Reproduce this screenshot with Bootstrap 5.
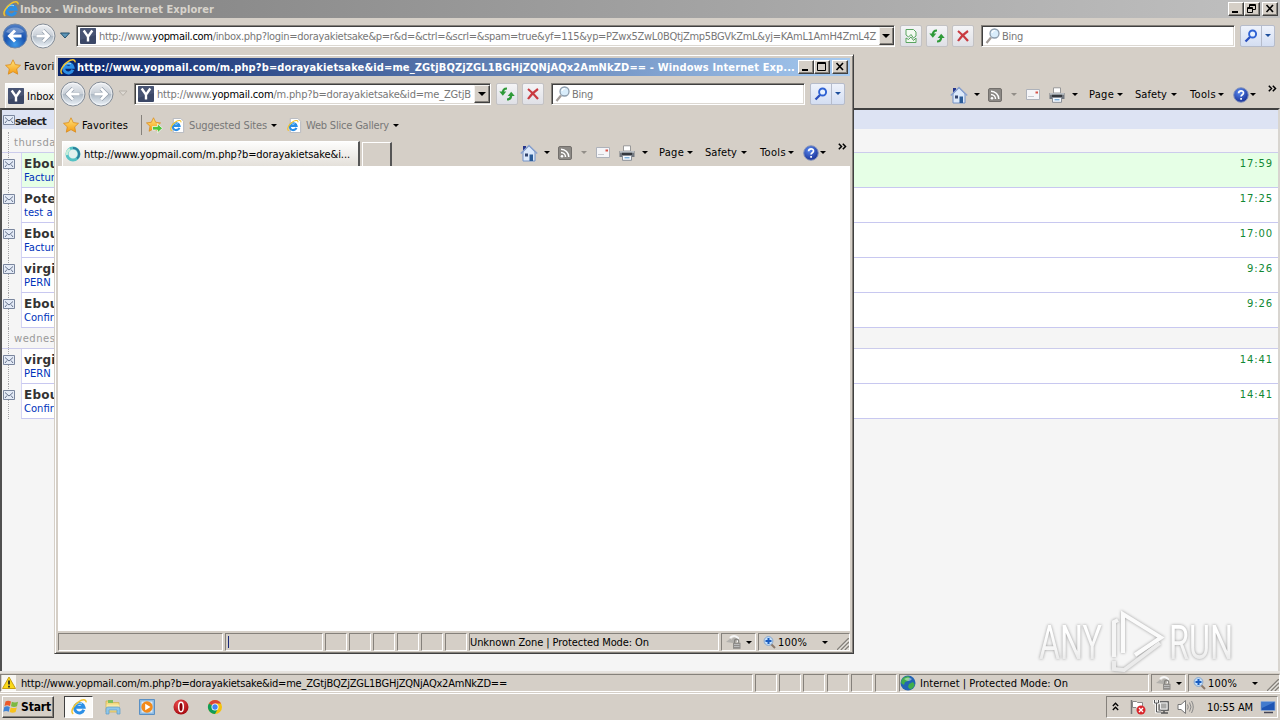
<!DOCTYPE html>
<html lang="en">
<head>
  <meta charset="UTF-8" />
  <meta name="viewport" content="width=device-width, initial-scale=1.0"/>
  <title>Inbox - Windows Internet Explorer</title>
  <link href="https://cdn.jsdelivr.net/npm/bootstrap@5.3.3/dist/css/bootstrap.min.css" rel="stylesheet"/>
  <style>
    :root {
      --face: #d5cfc7;
      --shade: #85817b;
      --dark: #404040;
    }

    body {
      width: 1280px;
      height: 720px;
      overflow: hidden;
      font: 11px/14px "DejaVu Sans Condensed", "DejaVu Sans", sans-serif;
      color: #000;
      background: var(--face);
    }

    svg { display: block; flex: none; }
    span { white-space: nowrap; flex: none; padding-top: 2px; }

    /* window frames */
    .desk { width: 1280px; height: 720px; }
    .title-bar { height: 18px; padding: 0 2px; gap: 1px; font-weight: bold; }
    .title-main { background: linear-gradient(90deg, #808080, #c0c0c0); color: #d8d4cc; padding-left: 3px; }
    .title-pop { background: linear-gradient(90deg, #0a246a, #a6caf0); color: #fff; }
    .caps { gap: 0; }
    .cap-btn {
      width: 16px; height: 14px;
      background: var(--face);
      border: 1px solid;
      border-color: #fff var(--dark) var(--dark) #fff;
      box-shadow: inset -1px -1px 0 var(--shade);
    }
    .cap-btn:last-child { margin-left: 2px; }
    .popup {
      left: 54px; top: 54px; width: 800px; height: 600px;
      background: var(--face);
      border: 1px solid;
      border-color: var(--face) var(--dark) var(--dark) var(--face);
      box-shadow: inset 1px 1px 0 #fff, inset -1px -1px 0 var(--shade);
      padding: 3px 3px 2px;
    }

    /* address row */
    .nav-row { height: 35px; padding-left: 2px; }
    .round-pair { gap: 2px; }
    .recent { margin: 0 6px 0 4px; }
    .field {
      height: 22px;
      padding-left: 3px;
      background: #fff;
      border: 1px solid;
      border-color: var(--shade) #fff #fff var(--shade);
      box-shadow: inset 1px 1px 0 var(--dark), inset -1px -1px 0 #dcd8d2;
      color: #777;
    }
    .field b { font-weight: normal; color: #000; }
    .f-url { gap: 3px; margin-right: 5px; }
    .f-wide { width: 819px; }
    .f-short { width: 357px; }
    .f-bing { width: 254px; gap: 1px; margin: 0 5px 0 7px; }
    .drop {
      width: 16px; height: 18px;
      background: var(--face);
      border: 1px solid;
      border-color: #f4f2ee var(--dark) var(--dark) #f4f2ee;
      box-shadow: inset -1px -1px 0 var(--shade);
    }
    .drop .arr { border-width: 4px 4px 0; }
    .sq-btn {
      width: 22px; height: 22px;
      background: linear-gradient(#f4f4f6, #dfe0e6);
      border: 1px solid #c3c2c4;
      border-radius: 2px;
      flex: none;
    }
    .blue-btn { width: 35px; background: linear-gradient(#eef2fb, #d4def2); border-color: #b6bccb; }
    .find-part { width: 21px; border-right: 1px solid #b6bccb; }
    .arr { width: 0; height: 0; border: 3px solid transparent; border-top-color: #000; border-bottom: 0; flex: none; }
    .arr-dim { border-top-color: #928e88; }
    .arr-blue { border-top-color: #1d4f9c; }

    /* favorites, tabs and command bar */
    .fav-row { height: 28px; padding-left: 5px; }
    .fav-row > span { margin-left: 3px; }
    .fav-main > span { padding-top: 0; }
    .fav-sep { width: 1px; height: 20px; margin: 0 4px 0 13px; background: var(--shade); }
    .fav-link { gap: 4px; margin-left: 10px; color: #777; }
    .fav-first { margin-left: 7px; }
    .tab-row { height: 27px; }
    .tab-box { background: linear-gradient(#fdfdfc, #e4e0da); border-top: 1px solid #fff; border-left: 1px solid #fff; gap: 3px; }
    .tab-inbox { margin: 2px 0 0 5px; width: 150px; padding-left: 2px; }
    .tab-pop { margin: 2px 0 0 4px; width: 298px; padding-left: 2px; border-right: 2px solid #555; }
    .tab-new { margin: 3px 0 0 2px; width: 30px; border: solid; border-width: 1px 2px 0 1px; border-color: #fff #555 #fff #fff; }
    .tools { width: 330px; }
    .tools span { padding-top: 0; }
    .tools > svg { margin-bottom: 13px; }
    .tool { display: flex; align-items: center; justify-content: space-between; flex: none; }
    .t-home { width: 38px; padding-right: 8px; }
    .t-feed { width: 38px; padding-right: 9px; }
    .t-mail { width: 23px; }
    .t-print { width: 40px; padding-right: 11px; }
    .t-page { width: 46px; padding-right: 12px; }
    .t-safe { width: 55px; padding-right: 13px; }
    .t-tool { width: 43px; padding-right: 9px; }
    .t-help { width: 35px; padding-right: 12px; }

    /* mailbox */
    .inbox { height: 563px; background: #f5f5f5; border: solid; border-width: 2px 2px 0 2px; border-color: #404040 #d8d5d0 #fff #505050; }
    .inbox-head { height: 19px; padding-left: 1px; background: #dde3f3; font: bold 10.5px/16px "DejaVu Sans", sans-serif; color: #222; }
    .rail { width: 19px; position: relative; flex: none; }
    .rail::before { content: ""; position: absolute; left: 6px; top: 0; bottom: 0; border-left: 1px dotted #a5a5a8; }
    .rail svg { position: relative; margin: 6px 0 0 1px; }
    .day { height: 21px; font: 10px/21px "DejaVu Sans", sans-serif; color: #999; border-bottom: 1px solid #ccccec; }
    .day-first { height: 24px; padding-top: 3px; }
    .day span { margin-left: -7px; letter-spacing: .5px; background: #f5f5f5; line-height: 12px; }
    .msg { height: 35px; }
    .msg-body { background: #fff; border-bottom: 1px solid #c8c8f0; border-left: 1px solid #d4d4f4; padding: 5px 5px 0 2px; font-family: "DejaVu Sans", sans-serif; }
    .msg-new { background: #e6ffe6; }
    .who { font-weight: bold; font-size: 12px; color: #333; line-height: 13px; letter-spacing: .2px; }
    .topic { font-size: 10px; color: #03b; line-height: 13px; }
    .when { font-size: 10px; color: #183; line-height: 12px; letter-spacing: .9px; }

    /* status bar and taskbar */
    .status { height: 20px; gap: 2px; }
    .status-pop { padding-top: 2px; }
    .cell {
      height: 18px;
      border: 1px solid;
      border-color: var(--shade) #fff #fff var(--shade);
      display: flex; align-items: center;
      flex: none;
    }
    .c-text { width: 753px; }
    .c-blank { width: 165px; }
    .c-progress { width: 98px; padding-left: 2px; }
    .c-progress i { width: 1px; height: 12px; background: #1a2a7a; }
    .c-slot { width: 22px; }
    .c-zone { width: 250px; }
    .c-lock { width: 35px; }
    .c-zoom { width: 92px; padding-left: 4px; gap: 2px; }
    .c-zoom .arr { margin-left: 13px; }
    .status-main { height: 22px; border-top: 2px solid #e6e3df; padding-top: 1px; }
    .taskbar { height: 27px; border-top: 1px solid #fff; padding: 0 2px; }
    .start {
      width: 52px; height: 22px; gap: 2px;
      border: 1px solid;
      border-color: #fff var(--dark) var(--dark) #fff;
      box-shadow: inset -1px -1px 0 var(--shade);
      font-weight: bold; font-size: 12px;
    }
    .start span { padding-top: 0; }
    .task-on {
      width: 29px; height: 22px; margin-left: 10px;
      background: #fbfaf8;
      border: 1px solid;
      border-color: var(--dark) #fff #fff var(--dark);
    }
    .pins { gap: 18px; margin-left: 12px; }
    .tray { width: 172px; height: 22px; gap: 7px; padding-left: 5px; border: 1px solid; border-color: var(--shade) #fff #fff var(--shade); }
    .tray-more { margin: 0 4px 2px 0; }
    .tray span { margin-left: 6px; }

    .brand { left: 1030px; top: 604px; }
    .brand g { filter: drop-shadow(0 0 1.500px #999); }
    .brand text { font: 400 49px/1 Roboto, sans-serif; }
  </style>
</head>
<body>

  <!-- icon sprite -->
  <svg width="0" height="0" class="position-absolute">
    <defs>
      <radialGradient id="gBlue" cx=".5" cy=".85" r=".8"><stop offset="0" stop-color="#3f9bea"/><stop offset=".55" stop-color="#1c55b0"/><stop offset="1" stop-color="#4c7cc4"/></radialGradient>
      <linearGradient id="gGlass" x1="0" y1="0" x2="0" y2="1"><stop offset="0" stop-color="#f0f2f5"/><stop offset=".48" stop-color="#c9d0d8"/><stop offset=".52" stop-color="#b0bbc6"/><stop offset="1" stop-color="#eef4fa"/></linearGradient>
      <linearGradient id="gStar" x1="0" y1="0" x2="0" y2="1"><stop offset="0" stop-color="#ffe680"/><stop offset="1" stop-color="#f59a10"/></linearGradient>
      <radialGradient id="gRed" cx=".4" cy=".3" r=".8"><stop offset="0" stop-color="#f05050"/><stop offset="1" stop-color="#9c0008"/></radialGradient>
      <radialGradient id="gHelp" cx=".4" cy=".3" r=".8"><stop offset="0" stop-color="#5a8af0"/><stop offset="1" stop-color="#10268c"/></radialGradient>
    </defs>
    <symbol id="ie" viewBox="0 0 16 16">
      <path d="M12.800 10.800A4.700 4.700 0 1 1 13 8.300H4.500" fill="none" stroke="#2b8fe6" stroke-width="3"/>
      <path d="M4 7.400C5 4.800 8 3.400 11 4.800" fill="none" stroke="#9edcff" stroke-width="1"/>
      <path d="M2.300 14.800C-1 13 2.500 6 7.500 2.800C11 .4 15.500-.2 15 3.400" fill="none" stroke="#f3c32d" stroke-width="1.500"/>
    </symbol>
    <symbol id="iepage" viewBox="0 0 16 16">
      <path d="M3.500.5h8l3 3v12h-11z" fill="#fff" stroke="#b5b9bf"/>
      <use href="#ie" x="0" y="2" width="12.500" height="12.500"/>
    </symbol>
    <symbol id="back" viewBox="0 0 26 26">
      <circle cx="13" cy="13" r="12" fill="url(#gBlue)" stroke="#7087a8"/>
      <path d="M4 9a10 8 0 0 1 18 0q-9 4-18 0z" fill="#fff" opacity=".3"/>
      <path d="M19.500 13H8M13 7.500L7.500 13l5.500 5.500" fill="none" stroke="#fff" stroke-width="3"/>
    </symbol>
    <symbol id="backoff" viewBox="0 0 26 26">
      <circle cx="13" cy="13" r="12" fill="url(#gGlass)" stroke="#858d97"/>
      <circle cx="13" cy="13" r="10.800" fill="none" stroke="#fff" stroke-width=".8" opacity=".7"/>
      <path d="M19.500 13H8M13 7.500L7.500 13l5.500 5.500" fill="none" stroke="#8f9aa8" stroke-width="4"/>
      <path d="M19.500 13H8M13 7.500L7.500 13l5.500 5.500" fill="none" stroke="#fff" stroke-width="2.800"/>
    </symbol>
    <symbol id="fwdoff" viewBox="0 0 26 26"><use href="#backoff" transform="translate(26 0) scale(-1 1)" width="26" height="26"/></symbol>
    <symbol id="ylogo" viewBox="0 0 16 16">
      <rect width="16" height="16" rx="1" fill="#3b4766"/>
      <path d="M0 0h16v7L0 12z" fill="#55627f" opacity=".5"/>
      <path d="M3.700 2.500L8 8.600 12.300 2.500M8 8v5.500" fill="none" stroke="#fff" stroke-width="2.400"/>
    </symbol>
    <symbol id="star" viewBox="0 0 16 16"><path d="M8 .8l2.300 4.800 5.200.7-3.800 3.600 1 5.300L8 12.600l-4.700 2.600 1-5.300L.5 6.300l5.200-.7z" fill="url(#gStar)" stroke="#d98a1c" stroke-width=".8"/></symbol>
    <symbol id="staradd" viewBox="0 0 17 17"><use href="#star" width="15" height="15"/><path d="M6.500 9.500h5V6.800l5 4.500-5 4.500V13h-5z" fill="#4fc43c" stroke="#fff" stroke-width=".7"/></symbol>
    <symbol id="refresh" viewBox="0 0 16 16">
      <path d="M8 2.500C5 2.500 3.800 4 3.800 7" fill="none" stroke="#2f9a38" stroke-width="2.200"/><path d="M.3 5.500h7L3.800 9.800z" fill="#2f9a38"/>
      <path d="M8 13.500c3 0 4.200-1.500 4.200-4.500" fill="none" stroke="#2f9a38" stroke-width="2.200"/><path d="M8.700 10h7L12.200 5.700z" fill="#2f9a38"/>
    </symbol>
    <symbol id="compat" viewBox="0 0 16 16"><path d="M3 7V1.500h7.500L13 4v4l-2.500 2L8 6.500 5.500 9z" fill="#f2faf0" stroke="#5aa560"/><path d="M3 10l2.500 1.500L8 9l2.500 3.500L13 10v4.500H3z" fill="#f2faf0" stroke="#5aa560"/></symbol>
    <symbol id="stop" viewBox="0 0 16 16"><path d="M3 3q5 4 10 10M13 3Q7 7 3 13" fill="none" stroke="#c93a40" stroke-width="2.200"/></symbol>
    <symbol id="glass" viewBox="0 0 16 16"><path d="M1.500 15L6 9.500" stroke="#a39c98" stroke-width="2.200"/><circle cx="9.500" cy="5.500" r="4.500" fill="#d9edfb" stroke="#8d9dad" stroke-width="1.300"/><path d="M7 5a3 3 0 0 1 3-2.500" fill="none" stroke="#fff" stroke-width="1.200"/></symbol>
    <symbol id="find" viewBox="0 0 14 14"><path d="M1.500 12.500L6 8" stroke="#2a4fbd" stroke-width="2.300"/><circle cx="8.600" cy="5" r="3.500" fill="#e8f2ff" stroke="#2f62d4" stroke-width="1.900"/></symbol>
    <symbol id="home" viewBox="0 0 18 18"><path d="M3 2h3v4L3 9z" fill="#24358c"/><path d="M3 8l6-6 6 6v9H3z" fill="#dce9fa" stroke="#7593c8"/><path d="M.8 9.500L9 1.500l8.200 8" fill="none" stroke="#8ba2ce" stroke-width="1.600"/><path d="M9.500 10.500h3.500V17H9.500z" fill="#2b5c98"/><path d="M5 9.500h3v3H5z" fill="#33446e"/></symbol>
    <symbol id="feed" viewBox="0 0 14 14"><rect x=".5" y=".5" width="13" height="13" rx="1.500" fill="#8c8985" stroke="#73706c"/><circle cx="4" cy="10.200" r="1.300" fill="#fff"/><path d="M3 6.500a4.500 4.500 0 0 1 4.500 4.500M3 3.200A7.800 7.800 0 0 1 10.800 11" fill="none" stroke="#fff" stroke-width="1.500"/></symbol>
    <symbol id="mail" viewBox="0 0 14 11"><path d="M.5.5h13v10H.5z" fill="#f5f5f8" stroke="#aeb2ba"/><path d="M2 7.500h6" stroke="#c6c8ce"/><path d="M9.500 2.500h2.500v2H9.500z" fill="#d65348"/></symbol>
    <symbol id="print" viewBox="0 0 16 16"><path d="M4.500.8h7V6h-7z" fill="#fff" stroke="#999"/><path d="M.5 6h15v6H.5z" fill="#71777f"/><path d="M1 6h14v1.800H1z" fill="#b9bec4"/><path d="M3 7.800h10v3H3z" fill="#34383e"/><path d="M3.500 10.500h9v4.800h-9z" fill="#f4f9ff" stroke="#8a8f96"/><path d="M5.500 12.800h5" stroke="#4a90c8"/></symbol>
    <symbol id="help" viewBox="0 0 16 16"><circle cx="8" cy="8" r="7.300" fill="url(#gHelp)" stroke="#8796bc" stroke-width="1"/><path d="M5.600 6.200C5.600 3 10.600 3.200 10.500 6 10.400 7.800 8.100 7.700 8.100 9.600M8.100 11v1.800" fill="none" stroke="#fff" stroke-width="1.700"/></symbol>
    <symbol id="more" viewBox="0 0 9 7"><path d="M.8.800L3.500 3.500.8 6.200M4.800.800L7.500 3.500 4.800 6.200" fill="none" stroke="#000" stroke-width="1.500"/></symbol>
    <symbol id="env" viewBox="0 0 12 10"><path d="M.5.500h11v9H.5z" fill="#e4ebf7" stroke="#7a869e"/><path d="M2 2.500l4 3.500 4-3.500M2 8l2-2.500M10 8L8 5.500" fill="none" stroke="#66728c"/></symbol>
    <symbol id="lock" viewBox="0 0 16 16"><path d="M0 8l5-4v2q3-4 6-2v3L7 13V9z" fill="#b3b1ad"/><path d="M4 4q4-4 8 0v4" fill="none" stroke="#f6f6f6" stroke-width="2"/><path d="M8.500 9V7.200a2 2 0 0 1 4.200 0V9" fill="none" stroke="#85837f" stroke-width="1.200"/><path d="M7 8.800h7.500v6H7z" fill="#8f8d8a"/><path d="M8 10.500h5.500M8 12.500h5.500" stroke="#bbb"/></symbol>
    <symbol id="zoom" viewBox="0 0 13 13"><path d="M8 8l4 4" stroke="#8b7a6c" stroke-width="2"/><circle cx="5.500" cy="5" r="4.400" fill="#c4e0fb" stroke="#86a5cc"/><path d="M5.500 2v6M2.500 5h6" stroke="#1a5cc0" stroke-width="2"/></symbol>
    <symbol id="grip" viewBox="0 0 12 12"><path d="M0 12L12 0M4 12l8-8M8 12l4-4" stroke="#85817b" stroke-width="1.500"/><path d="M1.500 12L12 1.500M5.500 12L12 5.500M9.500 12L12 9.500" stroke="#fff" stroke-width=".7"/></symbol>
    <symbol id="globe" viewBox="0 0 16 16"><circle cx="8" cy="8" r="7.500" fill="#2264b4"/><path d="M3 3q4-3 7-1L8 6l-3 1-1 3-3-2q0-3 2-5zM9 9l4-2 1.800 3q-1.500 3.500-4.500 4.500L8 12z" fill="#41ae4b"/><path d="M4 4q4-3 8 0-3 4-8 0z" fill="#fff" opacity=".45"/></symbol>
    <symbol id="warn" viewBox="0 0 16 16"><path d="M1 0h14v16H1z" fill="#f7f6f2"/><path d="M8 2l6.500 11.500h-13z" fill="#fbd916" stroke="#c79f10"/><path d="M8 5.500v4M8 10.800v1.700" stroke="#222" stroke-width="1.700"/></symbol>
    <symbol id="flagwin" viewBox="0 0 16 16"><path d="M2.500 2.500Q5 .8 8 2.500L7 7Q4.300 5.500 1.500 7z" fill="#ec5a2a"/><path d="M8.800 2.800Q12 4.200 15 2.700L14 7.300Q11 8.800 8 7.300z" fill="#7cb942"/><path d="M1.300 8Q4 6.500 6.800 8L5.800 12.700Q3 11.300.3 12.700z" fill="#3f83d6"/><path d="M7.700 8.400Q10.500 9.800 13.800 8.400L12.600 13Q9.600 14.400 6.700 13z" fill="#f8c21c"/></symbol>
    <symbol id="folder" viewBox="0 0 16 16"><path d="M1 2h5l1 1.500h7V13H1z" fill="#f1d980" stroke="#cfae4e" stroke-width=".7"/><path d="M3 1h5v3H3z" fill="#7fbf5e"/><path d="M1.500 5.500h13l-.8 6H2z" fill="#fae9a4"/><path d="M1 15V10q0-2 2-2h10q2 0 2 2v5h-3v-4H4v4z" fill="#8fc7ea" stroke="#5b9bc8" stroke-width=".7"/></symbol>
    <symbol id="wmp" viewBox="0 0 16 16"><path d="M.5.500h15v15H.5z" fill="#8dbbe2" stroke="#5a90c4"/><path d="M2.500 2.500h11v11h-11z" fill="#dcebf8"/><circle cx="8" cy="8" r="5.700" fill="#f28a1b"/><path d="M6.200 4.800L11.500 8l-5.300 3.200z" fill="#fff"/></symbol>
    <symbol id="opera" viewBox="0 0 16 16"><circle cx="8" cy="8" r="7.500" fill="url(#gRed)"/><ellipse cx="8" cy="8" rx="2.300" ry="4.700" fill="#8a0008" stroke="#fff" stroke-width="1.500"/></symbol>
    <symbol id="chrome" viewBox="0 0 16 16"><circle cx="8" cy="8" r="7" fill="#f4c20d"/><path d="M8 8L1.900 4.500A7 7 0 0 1 14.100 4.500H8z" fill="#db4437"/><path d="M1.900 4.500A7 7 0 0 0 8 15l3-5.200L8 8z" fill="#0f9d58"/><circle cx="8" cy="8" r="3.500" fill="#fff"/><circle cx="8" cy="8" r="2.700" fill="#4285f4"/></symbol>
    <symbol id="min" viewBox="0 0 14 12"><path d="M3 9h6" stroke="#000" stroke-width="2"/></symbol>
    <symbol id="max" viewBox="0 0 14 12"><path d="M2.500 1.500h8v8h-8zM2.500 2.500h8" fill="none" stroke="#000"/></symbol>
    <symbol id="restore" viewBox="0 0 14 12"><path d="M4.500 4V1.500h6v5H8M4.500 2.500h6M2.500 4.500h5v5h-5zM2.500 5.500h5" fill="none" stroke="#000"/></symbol>
    <symbol id="close" viewBox="0 0 14 12"><path d="M3.500 2l6.500 7M10 2L3.500 9" stroke="#000" stroke-width="1.600"/></symbol>
  </svg>

  <div class="desk d-flex flex-column">

    <!-- main window -->
    <div class="title-bar title-main d-flex align-items-center">
      <svg width="16" height="16"><use href="#ie"/></svg>
      <span data-w="194">Inbox - Windows Internet Explorer</span>
      <div class="caps d-flex ms-auto">
        <div class="cap-btn"><svg width="14" height="12"><use href="#min"/></svg></div>
        <div class="cap-btn"><svg width="14" height="12"><use href="#restore"/></svg></div>
        <div class="cap-btn"><svg width="14" height="12"><use href="#close"/></svg></div>
      </div>
    </div>

    <div class="nav-row d-flex align-items-center">
      <div class="round-pair d-flex">
        <svg width="26" height="26"><use href="#back"/></svg>
        <svg width="26" height="26"><use href="#fwdoff"/></svg>
      </div>
      <svg width="10" height="7" class="recent"><path d="M.5 1h9L5 6z" fill="#5d96b8" stroke="#24516e"/></svg>
      <div class="field f-url f-wide d-flex align-items-center">
        <svg width="16" height="16"><use href="#ylogo"/></svg>
        <span data-w="777">http://www.<b>yopmail.com</b>/inbox.php?login=dorayakietsake&amp;p=r&amp;d=&amp;ctrl=&amp;scrl=&amp;spam=true&amp;yf=115&amp;yp=PZwx5ZwL0BQtjZmp5BGVkZmL&amp;yj=KAmL1AmH4ZmL4Z</span>
        <div class="drop d-flex align-items-center justify-content-center ms-auto"><i class="arr"></i></div>
      </div>
      <div class="d-flex gap-1">
        <div class="sq-btn d-flex align-items-center justify-content-center"><svg width="16" height="16"><use href="#compat"/></svg></div>
        <div class="sq-btn d-flex align-items-center justify-content-center"><svg width="16" height="16"><use href="#refresh"/></svg></div>
        <div class="sq-btn d-flex align-items-center justify-content-center"><svg width="16" height="16"><use href="#stop"/></svg></div>
      </div>
      <div class="field f-bing d-flex align-items-center">
        <svg width="16" height="16"><use href="#glass"/></svg><span data-w="21">Bing</span>
      </div>
      <div class="sq-btn blue-btn d-flex">
        <div class="find-part d-flex align-items-center justify-content-center"><svg width="14" height="14"><use href="#find"/></svg></div>
        <div class="d-flex align-items-center justify-content-center flex-fill"><i class="arr arr-blue"></i></div>
      </div>
    </div>

    <div class="fav-row fav-main d-flex align-items-center">
      <svg width="16" height="16"><use href="#star"/></svg><span data-w="46">Favorites</span>
    </div>

    <div class="tab-row d-flex">
      <div class="tab-box tab-inbox d-flex align-items-center">
        <svg width="16" height="16"><use href="#ylogo"/></svg><span data-w="27">Inbox</span>
      </div>
      <div class="tools d-flex align-items-center ms-auto">
        <div class="tool t-home"><svg width="18" height="18"><use href="#home"/></svg><i class="arr"></i></div>
        <div class="tool t-feed"><svg width="14" height="14"><use href="#feed"/></svg><i class="arr arr-dim"></i></div>
        <div class="tool t-mail"><svg width="14" height="11"><use href="#mail"/></svg></div>
        <div class="tool t-print"><svg width="16" height="16"><use href="#print"/></svg><i class="arr"></i></div>
        <div class="tool t-page"><span data-w="25">Page</span><i class="arr"></i></div>
        <div class="tool t-safe"><span data-w="32">Safety</span><i class="arr"></i></div>
        <div class="tool t-tool"><span data-w="26">Tools</span><i class="arr"></i></div>
        <div class="tool t-help"><svg width="16" height="16"><use href="#help"/></svg><i class="arr"></i></div>
        <svg width="9" height="7"><use href="#more"/></svg>
      </div>
    </div>

    <div class="inbox">
      <div class="inbox-head d-flex align-items-center"><svg width="12" height="10"><use href="#env"/></svg><span data-w="31">select</span><span class="ms-2 fw-normal text-secondary">:</span></div>
      <div class="day day-first d-flex align-items-center"><div class="rail h-100"></div><span>thursday</span></div>
      <div id="thursday"></div>
      <div class="day d-flex align-items-center"><div class="rail h-100"></div><span>wednesday</span></div>
      <div id="wednesday"></div>
    </div>

    <div class="status status-main d-flex">
      <div class="cell c-text"><svg width="16" height="16"><use href="#warn"/></svg><span class="ms-1" data-w="486">http://www.yopmail.com/m.php?b=dorayakietsake&amp;id=me_ZGtjBQZjZGL1BGHjZQNjAQx2AmNkZD==</span></div>
      <div class="cell c-slot"></div><div class="cell c-slot"></div><div class="cell c-slot"></div>
      <div class="cell c-slot"></div><div class="cell c-slot"></div><div class="cell c-slot"></div>
      <div class="cell c-zone"><svg width="16" height="16"><use href="#globe"/></svg><span class="ms-1" data-w="148">Internet | Protected Mode: On</span></div>
      <div class="cell c-lock"><svg width="16" height="16" class="ms-1"><use href="#lock"/></svg><i class="arr ms-1"></i></div>
      <div class="cell c-zoom"><svg width="13" height="13"><use href="#zoom"/></svg><span data-w="29">100%</span><i class="arr"></i><svg width="12" height="12" class="ms-auto mt-1"><use href="#grip"/></svg></div>
    </div>

    <div class="taskbar d-flex align-items-center">
      <div class="start d-flex align-items-center"><svg width="16" height="16"><use href="#flagwin"/></svg><span data-w="30">Start</span></div>
      <div class="task-on d-flex align-items-center justify-content-center"><svg width="16" height="16"><use href="#ie"/></svg></div>
      <div class="pins d-flex">
        <svg width="16" height="16"><use href="#folder"/></svg>
        <svg width="16" height="16"><use href="#wmp"/></svg>
        <svg width="16" height="16"><use href="#opera"/></svg>
        <svg width="16" height="16"><use href="#chrome"/></svg>
      </div>
      <div class="tray d-flex align-items-center ms-auto">
        <svg width="7" height="9" class="tray-more"><path d="M.8 4L3.500 1.200 6.200 4M.8 8L3.500 5.200 6.200 8" fill="none" stroke="#000" stroke-width="1.300"/></svg>
        <svg width="16" height="16"><path d="M1.500 1v14" stroke="#777" stroke-width="1.500"/><path d="M2.500 2.500h4l1 1h5v6H7l-1-1H2.500z" fill="#fff" stroke="#888"/><circle cx="11" cy="11" r="4.500" fill="#d9262c"/><path d="M9 9l4 4M13 9l-4 4" stroke="#fff" stroke-width="1.400"/></svg>
        <svg width="17" height="16"><path d="M6 2.500h9.500v9H6z" fill="#9a9a98" stroke="#666"/><path d="M7.500 4h6.500v6H7.500z" fill="#a9a9a7" stroke="#eee"/><path d="M8 14h7M11 12v2" stroke="#555" stroke-width="1.500"/><path d="M1.500 1v3h4V1M3.500 4v9H8" fill="none" stroke="#fff" stroke-width="2.600"/><path d="M1.500 1v3h4V1M3.500 4v9H8" fill="none" stroke="#555"/></svg>
        <svg width="17" height="16"><path d="M1 5.500h3L8.500 1.500v13L4 10.500H1z" fill="#fff" stroke="#777"/><path d="M10.500 5.500q1.500 2.500 0 5M12.500 3.500q3 4.500 0 9M14.500 2q3.500 6 0 12" fill="none" stroke="#888"/></svg>
        <span data-w="46">10:55 AM</span>
        <svg width="16" height="14"><path d="M1 1.500h14v9H1z" fill="#1e55b4" stroke="#93b0d8" stroke-width=".8"/><path d="M1.500 2h13L2 8z" fill="#5a94e0" opacity=".6"/><path d="M4 12.500h9" stroke="#445" stroke-width="1.500"/></svg>
      </div>
    </div>
  </div>

  <!-- watermark -->
  <svg class="brand position-absolute" width="250" height="90">
    <defs><linearGradient id="gMark" x1="0" y1="0" x2="0" y2="1"><stop offset=".3" stop-color="#fff"/><stop offset=".65" stop-color="#f4f4f4"/><stop offset="1" stop-color="#dcdcdc"/></linearGradient></defs>
    <g fill="url(#gMark)">
      <text x="9" y="55" textLength="63" lengthAdjust="spacingAndGlyphs">ANY</text>
      <text x="139" y="55" textLength="64" lengthAdjust="spacingAndGlyphs">RUN</text>
      <path d="M93 49V10l38 23.500-26 17.500" fill="none" stroke="#fbfbfb" stroke-width="4"/>
      <path d="M84 53V18l4-2" fill="none" stroke="#f6f6f6" stroke-width="4"/>
      <path d="M84 57v8l10 1 36-27" fill="none" stroke="#ebebeb" stroke-width="4"/>
    </g>
  </svg>

  <!-- popup window -->
  <div class="popup position-absolute d-flex flex-column">
    <div class="title-bar title-pop d-flex align-items-center">
      <svg width="16" height="16"><use href="#ie"/></svg>
      <span data-w="718">http://www.yopmail.com/m.php?b=dorayakietsake&amp;id=me_ZGtjBQZjZGL1BGHjZQNjAQx2AmNkZD== - Windows Internet Exp...</span>
      <div class="caps d-flex ms-auto">
        <div class="cap-btn"><svg width="14" height="12"><use href="#min"/></svg></div>
        <div class="cap-btn"><svg width="14" height="12"><use href="#max"/></svg></div>
        <div class="cap-btn"><svg width="14" height="12"><use href="#close"/></svg></div>
      </div>
    </div>

    <div class="nav-row d-flex align-items-center">
      <div class="round-pair d-flex">
        <svg width="26" height="26"><use href="#backoff"/></svg>
        <svg width="26" height="26"><use href="#fwdoff"/></svg>
      </div>
      <svg width="10" height="7" class="recent"><path d="M1 1h8L5 5.500z" fill="#dedad4" stroke="#b5b0a8"/></svg>
      <div class="field f-url f-short d-flex align-items-center">
        <svg width="16" height="16"><use href="#ylogo"/></svg>
        <span data-w="314">http://www.<b>yopmail.com</b>/m.php?b=dorayakietsake&amp;id=me_ZGtjB</span>
        <div class="drop d-flex align-items-center justify-content-center ms-auto"><i class="arr"></i></div>
      </div>
      <div class="d-flex gap-1">
        <div class="sq-btn d-flex align-items-center justify-content-center"><svg width="16" height="16"><use href="#refresh"/></svg></div>
        <div class="sq-btn d-flex align-items-center justify-content-center"><svg width="16" height="16"><use href="#stop"/></svg></div>
      </div>
      <div class="field f-bing d-flex align-items-center">
        <svg width="16" height="16"><use href="#glass"/></svg><span data-w="21">Bing</span>
      </div>
      <div class="sq-btn blue-btn d-flex">
        <div class="find-part d-flex align-items-center justify-content-center"><svg width="14" height="14"><use href="#find"/></svg></div>
        <div class="d-flex align-items-center justify-content-center flex-fill"><i class="arr arr-blue"></i></div>
      </div>
    </div>

    <div class="fav-row d-flex align-items-center">
      <svg width="16" height="16"><use href="#star"/></svg><span data-w="46">Favorites</span>
      <div class="fav-sep"></div>
      <svg width="17" height="17"><use href="#staradd"/></svg>
      <div class="fav-link fav-first d-flex align-items-center">
        <svg width="15" height="15"><use href="#iepage"/></svg><span data-w="78">Suggested Sites</span><i class="arr"></i>
      </div>
      <div class="fav-link d-flex align-items-center">
        <svg width="15" height="15"><use href="#iepage"/></svg><span data-w="83">Web Slice Gallery</span><i class="arr"></i>
      </div>
    </div>

    <div class="tab-row d-flex">
      <div class="tab-box tab-pop d-flex align-items-center">
        <svg width="16" height="16"><circle cx="8" cy="8" r="6" fill="#e2f1ee" stroke="#55c2c4" stroke-width="3"/><path d="M8 2a6 6 0 0 1 4 10.500" fill="none" stroke="#2c7f9c" stroke-width="2"/><path d="M2 9a6 6 0 0 1 3-6" fill="none" stroke="#c4eeda" stroke-width="2.500"/></svg>
        <span data-w="266">http://www.yopmail.com/m.php?b=dorayakietsake&amp;i...</span>
      </div>
      <div class="tab-new"></div>
      <div class="tools d-flex align-items-center ms-auto">
        <div class="tool t-home"><svg width="18" height="18"><use href="#home"/></svg><i class="arr"></i></div>
        <div class="tool t-feed"><svg width="14" height="14"><use href="#feed"/></svg><i class="arr arr-dim"></i></div>
        <div class="tool t-mail"><svg width="14" height="11"><use href="#mail"/></svg></div>
        <div class="tool t-print"><svg width="16" height="16"><use href="#print"/></svg><i class="arr"></i></div>
        <div class="tool t-page"><span data-w="25">Page</span><i class="arr"></i></div>
        <div class="tool t-safe"><span data-w="32">Safety</span><i class="arr"></i></div>
        <div class="tool t-tool"><span data-w="26">Tools</span><i class="arr"></i></div>
        <div class="tool t-help"><svg width="16" height="16"><use href="#help"/></svg><i class="arr"></i></div>
        <svg width="9" height="7"><use href="#more"/></svg>
      </div>
    </div>

    <div class="bg-white flex-fill"></div>

    <div class="status status-pop d-flex">
      <div class="cell c-blank"></div>
      <div class="cell c-progress"><i></i></div>
      <div class="cell c-slot"></div><div class="cell c-slot"></div><div class="cell c-slot"></div>
      <div class="cell c-slot"></div><div class="cell c-slot"></div><div class="cell c-slot"></div>
      <div class="cell c-zone"><span data-w="179">Unknown Zone | Protected Mode: On</span></div>
      <div class="cell c-lock"><svg width="16" height="16" class="ms-1"><use href="#lock"/></svg><i class="arr ms-1"></i></div>
      <div class="cell c-zoom"><svg width="13" height="13"><use href="#zoom"/></svg><span data-w="29">100%</span><i class="arr"></i><svg width="12" height="12" class="ms-auto mt-1"><use href="#grip"/></svg></div>
    </div>
  </div>

  <script src="https://cdn.jsdelivr.net/npm/bootstrap@5.3.3/dist/js/bootstrap.bundle.min.js"></script>
  <script>
    const mails = {
      thursday: [
        ['Ebou', 'Factur', '17:59'],
        ['Potet', 'test a', '17:25'],
        ['Ebou', 'Factur', '17:00'],
        ['virgi', 'PERN', '9:26'],
        ['Ebou', 'Confir', '9:26'],
      ],
      wednesday: [
        ['virgi', 'PERN', '14:41'],
        ['Ebou', 'Confir', '14:41'],
      ],
    };

    Object.keys(mails).forEach((day) => {
      document.getElementById(day).innerHTML = mails[day].map(([who, topic, when], i) => `
        <div class="msg d-flex">
          <div class="rail"><svg width="12" height="10"><use href="#env"/></svg></div>
          <div class="msg-body flex-fill d-flex justify-content-between ${day === 'thursday' && i === 0 ? 'msg-new' : ''}">
            <div><div class="who">${who}</div><div class="topic">${topic}</div></div>
            <div class="when">${when}</div>
          </div>
        </div>`).join('');
    });

    // spread each label over its set width
    document.querySelectorAll('[data-w]').forEach((el) => {
      const extra = el.dataset.w - el.getBoundingClientRect().width;
      el.style.letterSpacing = (extra / el.textContent.length) + 'px';
    });
  </script>

</body>
</html>
